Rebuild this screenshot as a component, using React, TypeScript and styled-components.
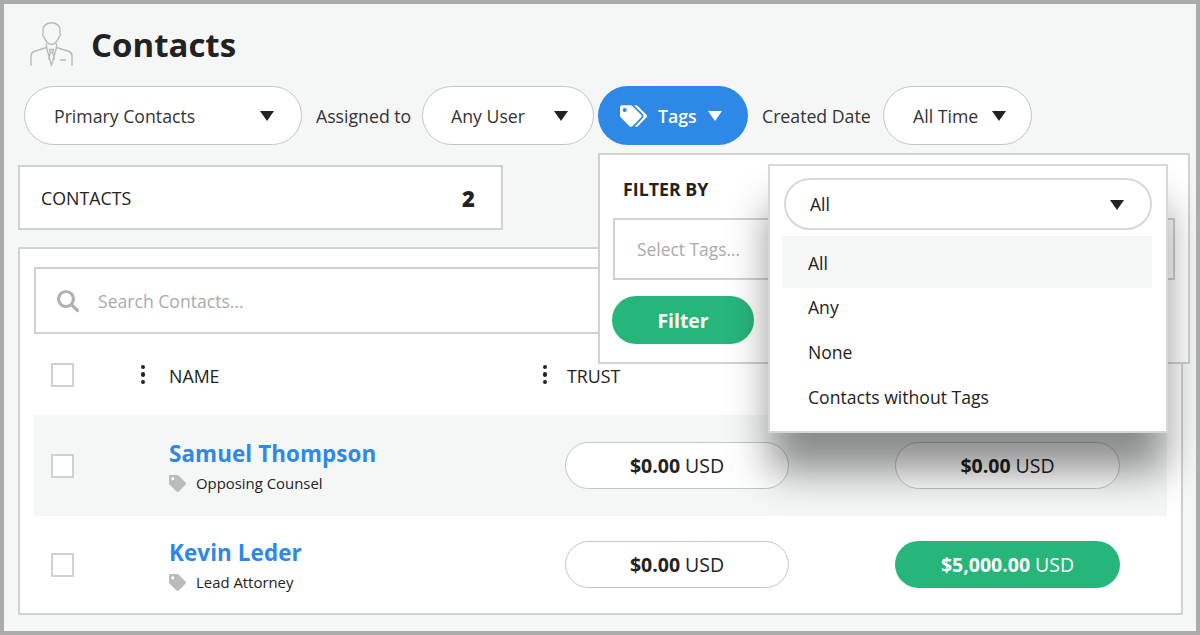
import React from "react";
import styled, { createGlobalStyle } from "styled-components";

const Global = createGlobalStyle`
  html, body { margin: 0; padding: 0; }
  body { font-family: "Open Sans", "Noto Sans", sans-serif; color: #222; }
  * { box-sizing: border-box; }
`;

const Frame = styled.div`
  position: relative;
  width: 1200px;
  height: 635px;
  border: 4px solid #ababab;
  background: #f5f7f7;
  padding: 18px 13px 0 14px;
  overflow: hidden;
`;
const Header = styled.header`
  display: flex;
  align-items: center;
  height: 44px;
  padding-left: 12px;
  gap: 17px;
`;
const Title = styled.h1`
  margin: 0;
  padding-top: 1px;
  font-size: 33px;
  line-height: 44px;
  font-weight: 700;
  color: #222;
`;
const FilterRow = styled.div`
  display: flex;
  align-items: center;
  height: 60px;
  margin-top: 19px;
  padding-left: 6px;
`;
const Pill = styled.div<{ $w: number; $active?: boolean; $gap: number; $pr: number; $pl: number }>`
  width: ${(p) => p.$w}px;
  height: 59px;
  flex: none;
  display: flex;
  align-items: center;
  justify-content: space-between;
  padding: 1px ${(p) => p.$pr}px 0 ${(p) => p.$pl}px;
  margin-right: ${(p) => p.$gap}px;
  border-radius: 30px;
  font-size: 17.7px;
  background: ${(p) => (p.$active ? "#2e88e5" : "#fff")};
  border: ${(p) => (p.$active ? "none" : "1px solid #c4c6c6")};
  color: ${(p) => (p.$active ? "#fff" : "#333")};
  font-weight: ${(p) => (p.$active ? 600 : 400)};
`;
const Caret = styled.span<{ $light?: boolean }>`
  width: 0;
  height: 0;
  flex: none;
  margin-top: 1px;
  border-left: 7.5px solid transparent;
  border-right: 7.5px solid transparent;
  border-top: 10px solid ${(p) => (p.$light ? "#fff" : "#222")};
`;
const TagsInner = styled.span`
  display: flex;
  align-items: center;
  gap: 11px;
`;
const FilterLabel = styled.span<{ $w: number }>`
  font-size: 17.7px;
  padding-top: 1px;
  color: #333;
  white-space: nowrap;
  flex: none;
  width: ${(p) => p.$w}px;
`;
const CountCard = styled.div`
  width: 485px;
  height: 65px;
  margin-top: 20px;
  background: #fff;
  border: 2px solid #d0d2d2;
  display: flex;
  align-items: center;
  justify-content: space-between;
  padding: 0 26px 0 21px;
  font-size: 17.8px;
  color: #222;
`;
const Count = styled.span`
  font-weight: 800;
  font-size: 22px;
`;
const TableCard = styled.section`
  width: 1165px;
  height: 368px;
  margin-top: 17px;
  background: #fff;
  border: 2px solid #d0d2d2;
  padding: 18px 14px 0;
`;
const SearchBox = styled.div`
  height: 67px;
  border: 2px solid #d0d2d2;
  display: flex;
  align-items: center;
  padding-left: 20px;
  gap: 18px;
  font-size: 17.6px;
  color: #aaa;
`;
const GridRow = styled.div<{ $h: number; $shaded?: boolean }>`
  display: grid;
  grid-template-columns: 17px 23px 95px 366px 32px 328px 225px;
  align-items: center;
  height: ${(p) => p.$h}px;
  background: ${(p) => (p.$shaded ? "#f5f7f7" : "#fff")};
`;
const Check = styled.span`
  grid-column: 2;
  width: 23px;
  height: 24px;
  background: #fff;
  border: 2px solid #d0d2d2;
`;
const Dots = styled.span<{ $right: number }>`
  justify-self: end;
  margin-right: ${(p) => p.$right}px;
  display: flex;
  flex-direction: column;
  gap: 3px;
  i { width: 4.5px; height: 4.5px; border-radius: 50%; background: #222; display: block; }
`;
const ColHead = styled.span`
  font-size: 17.8px;
  color: #222;
  padding-top: 3px;
`;
const NameCell = styled.div`
  grid-column: 4 / span 2;
  display: flex;
  flex-direction: column;
  gap: 3px;
`;
const Name = styled.a`
  font-size: 22.4px;
  line-height: 32px;
  font-weight: 700;
  color: #2e88e5;
  letter-spacing: 0.1px;
`;
const TagLine = styled.div`
  display: flex;
  align-items: center;
  gap: 10px;
  font-size: 14.9px;
  line-height: 20px;
  color: #222;
`;
const Money = styled.div<{ $green?: boolean }>`
  height: 47px;
  border-radius: 24px;
  display: flex;
  align-items: center;
  justify-content: center;
  gap: 5px;
  font-size: 19.5px;
  background: ${(p) => (p.$green ? "#27b67a" : "#fff")};
  color: ${(p) => (p.$green ? "#fff" : "#222")};
  border: ${(p) => (p.$green ? "none" : "1px solid #c4c6c6")};
  b { font-weight: 700; }
`;
const MoneyFirst = styled(Money)`
  grid-column: 6;
  width: 224px;
  margin-left: -2px;
`;
const MoneySecond = styled(Money)`
  grid-column: 7;
  width: 225px;
`;
const FilterPanel = styled.div`
  position: absolute;
  left: 594px;
  top: 149px;
  width: 592px;
  height: 211px;
  background: #fff;
  border: 2px solid #d0d2d2;
  padding: 22px 13px 0 12px;
`;
const PanelTitle = styled.div`
  font-size: 17.8px;
  font-weight: 700;
  line-height: 24px;
  padding-left: 11px;
  color: #222;
`;
const TagSelect = styled.div`
  height: 62px;
  margin: 17px 0 0 1px;
  border: 2px solid #d0d2d2;
  display: flex;
  align-items: center;
  padding-left: 22px;
  font-size: 17.4px;
  color: #aaa;
`;
const FilterButton = styled.div`
  width: 142px;
  height: 48px;
  margin-top: 16px;
  padding-top: 1px;
  border-radius: 24px;
  background: #27b67a;
  color: #fff;
  font-size: 19.4px;
  font-weight: 700;
  display: flex;
  align-items: center;
  justify-content: center;
`;
const Menu = styled.div`
  position: absolute;
  left: 764px;
  top: 160px;
  width: 400px;
  height: 269px;
  background: #fff;
  border: 2px solid #d6d8d8;
  padding: 12px 14px 0 12px;
  box-shadow: 0 40px 38px -2px rgba(0, 0, 0, 0.44);
`;
const MenuSelect = styled.div`
  height: 52px;
  margin-left: 2px;
  border-radius: 26px;
  border: 2px solid #d6d8d8;
  display: flex;
  align-items: center;
  justify-content: space-between;
  padding: 0 26px 0 24px;
  font-size: 17.6px;
  color: #222;
`;
const MenuList = styled.div`
  margin-top: 6px;
`;
const MenuItem = styled.div<{ $on?: boolean }>`
  height: ${(p) => (p.$on ? 52 : 45)}px;
  padding: ${(p) => (p.$on ? "1px 0 0 26px" : "0 0 7px 26px")};
  display: flex;
  align-items: center;
  font-size: 17.6px;
  color: #222;
  background: ${(p) => (p.$on ? "#f5f7f7" : "#fff")};
`;

const PersonIcon = () => (
  <svg width="44" height="44" viewBox="0 0 44 44" fill="none" stroke="#b8baba" strokeWidth="1.4">
    <path d="M21.500.7c-5 0-8.500 3.300-8.500 7.500 0 .8.100 1.600.200 2.300 0 .9-.7.8-.7 2 0 1.200.7 1.800 1.500 2.300 1 3.800 4 7.700 7.500 7.700s6.500-3.900 7.500-7.700c.8-.5 1.500-1.100 1.500-2.300 0-1.200-.7-1.100-.7-2 .100-.7.200-1.500.200-2.300 0-4.200-3.500-7.500-8.500-7.500Z" />
    <path d="M16.500 21.500v4L4 29.500C2 30.200 1 32 1 34v9.500M26.500 21.500v4L39 29.500c2 .7 3 2.500 3 4.500v9.500" />
    <path d="M16.500 25.500 21.500 43.500l5-18M19.500 27.500h4l-.8 3h-2.400zM20.300 30.500l-1.800 7M22.700 30.500l1.800 7M30 38h6" />
  </svg>
);
const TagsIcon = () => (
  <svg width="27" height="22" viewBox="0 0 640 512" fill="#fff">
    <path d="M497.900 225.900 286.100 14.100A48 48 0 0 0 252.100 0H48C21.500 0 0 21.500 0 48v204.100a48 48 0 0 0 14.100 33.900l211.900 211.900c18.700 18.700 49.100 18.700 67.900 0l204.100-204.100c18.700-18.700 18.700-49.100-.1-67.900zM112 160c-26.500 0-48-21.500-48-48s21.500-48 48-48 48 21.500 48 48-21.500 48-48 48zm513.900 133.800L421.800 497.900c-18.700 18.700-49.100 18.700-67.900 0l-.4-.4L527.600 323.500c17-17 26.400-39.600 26.400-63.600s-9.400-46.600-26.400-63.600L331.400 0h48.700a48 48 0 0 1 33.900 14.100l211.900 211.800c18.700 18.700 18.700 49.100 0 67.900z" />
  </svg>
);
const SmallTag = () => (
  <svg width="17" height="17" viewBox="0 0 512 512" fill="#bbb">
    <path d="M0 252.100V48C0 21.500 21.500 0 48 0h204.100a48 48 0 0 1 33.900 14.100l211.900 211.900c18.700 18.700 18.700 49.100 0 67.900L293.800 497.900c-18.700 18.700-49.100 18.700-67.900 0L14.100 286.100A48 48 0 0 1 0 252.100zM112 64c-26.500 0-48 21.500-48 48s21.500 48 48 48 48-21.500 48-48-21.500-48-48-48z" />
  </svg>
);
const SearchIcon = () => (
  <svg width="24" height="24" viewBox="0 0 24 24" fill="none" stroke="#b0b2b2" strokeWidth="3.200" strokeLinecap="round">
    <circle cx="10" cy="10" r="7.500" />
    <path d="M15.800 15.800l5.700 5.700" />
  </svg>
);
const ThreeDots = ({ right }: { right: number }) => (
  <Dots $right={right}>
    <i />
    <i />
    <i />
  </Dots>
);

const Row = ({ name, tag, amount, green, shaded, h }: { name: string; tag: string; amount: string; green?: boolean; shaded?: boolean; h: number }) => (
  <GridRow $h={h} $shaded={shaded}>
    <Check />
    <NameCell>
      <Name>{name}</Name>
      <TagLine>
        <SmallTag />
        {tag}
      </TagLine>
    </NameCell>
    <MoneyFirst>
      <b>$0.00</b> USD
    </MoneyFirst>
    <MoneySecond $green={green}>
      <b>{amount}</b> USD
    </MoneySecond>
  </GridRow>
);

export default function App() {
  return (
    <Frame>
      <Global />
      <Header>
        <PersonIcon />
        <Title>Contacts</Title>
      </Header>
      <FilterRow>
        <Pill $w={278} $gap={14} $pl={29} $pr={27}>
          Primary Contacts <Caret />
        </Pill>
        <FilterLabel $w={106}>Assigned to</FilterLabel>
        <Pill $w={172} $gap={4} $pl={28} $pr={25}>
          Any User <Caret />
        </Pill>
        <Pill $w={150} $gap={14} $pl={22} $pr={26} $active>
          <TagsInner>
            <TagsIcon />
            Tags
          </TagsInner>
          <Caret $light />
        </Pill>
        <FilterLabel $w={121}>Created Date</FilterLabel>
        <Pill $w={149} $gap={0} $pl={29} $pr={25}>
          All Time <Caret />
        </Pill>
      </FilterRow>
      <CountCard>
        CONTACTS <Count>2</Count>
      </CountCard>
      <TableCard>
        <SearchBox>
          <SearchIcon />
          Search Contacts...
        </SearchBox>
        <GridRow $h={81}>
          <Check />
          <ThreeDots right={24} />
          <ColHead>NAME</ColHead>
          <ThreeDots right={20} />
          <ColHead>TRUST</ColHead>
        </GridRow>
        <Row name="Samuel Thompson" tag="Opposing Counsel" amount="$0.00" shaded h={101} />
        <Row name="Kevin Leder" tag="Lead Attorney" amount="$5,000.00" green h={97} />
      </TableCard>
      <FilterPanel>
        <PanelTitle>FILTER BY</PanelTitle>
        <TagSelect>Select Tags...</TagSelect>
        <FilterButton>Filter</FilterButton>
      </FilterPanel>
      <Menu>
        <MenuSelect>
          All <Caret />
        </MenuSelect>
        <MenuList>
          <MenuItem $on>All</MenuItem>
          <MenuItem>Any</MenuItem>
          <MenuItem>None</MenuItem>
          <MenuItem>Contacts without Tags</MenuItem>
        </MenuList>
      </Menu>
    </Frame>
  );
}
